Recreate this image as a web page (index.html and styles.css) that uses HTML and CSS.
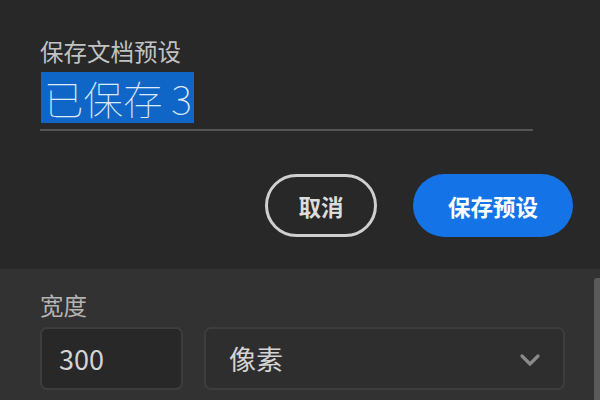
FILE: index.html
```html
<!DOCTYPE html>
<html lang="zh">
<head>
<meta charset="utf-8">
<link rel="stylesheet" href="styles.css">
</head>
<body>
<div class="dialog">
  <div class="label">保存文档预设</div>
  <div class="field"><span class="selected">已保存 3</span></div>
  <div class="actions">
    <button class="btn cancel">取消</button>
    <button class="btn save">保存预设</button>
  </div>
</div>
<div class="panel">
  <div class="label small">宽度</div>
  <div class="row">
    <div class="box num">300</div>
    <div class="box select">
      <span>像素</span>
      <svg class="chev" width="22" height="14" viewBox="0 0 22 14"><path d="M3 3 L11 11 L19 3" fill="none" stroke="#8a8a8a" stroke-width="3.2" stroke-linecap="round" stroke-linejoin="round"/></svg>
    </div>
  </div>
  <div class="scrollbar"></div>
</div>
</body>
</html>
```
FILE: styles.css
```css
html, body {
  margin: 0;
  padding: 0;
  background: #282828;
  font-family: "Noto Sans CJK SC", "Noto Sans", sans-serif;
  width: 600px;
  height: 400px;
  overflow: hidden;
}
.dialog {
  height: 269px;
  box-sizing: border-box;
  padding: 36px 0 0 40px;
  background: #282828;
}
.label {
  font-size: 23.5px;
  line-height: 30px;
  color: #c2c2c2;
}
.field {
  width: 493px;
  margin-top: 6px;
  padding-bottom: 6px;
  border-bottom: 2px solid #555555;
  height: 51px;
}
.selected {
  display: inline-block;
  margin-left: 1px;
  padding: 0 2px 0 3px;
  height: 51px;
  line-height: 51px;
  font-size: 39.5px;
  font-weight: 100;
  color: #dfeaf8;
  background: #0f66c6;
}
.actions {
  display: flex;
  justify-content: flex-end;
  gap: 36px;
  margin-top: 43px;
  padding-right: 27px;
}
.btn {
  font-family: "Noto Sans CJK SC", "Noto Sans", sans-serif;
  font-size: 22.5px;
  font-weight: 700;
  height: 63px;
  border-radius: 32px;
  box-sizing: border-box;
  padding: 0;
}
.cancel {
  width: 112px;
  background: transparent;
  border: 3px solid #cfcfcf;
  color: #dcdcdc;
}
.save {
  width: 160px;
  background: #1473e6;
  border: none;
  color: #ffffff;
}
.panel {
  position: relative;
  height: 131px;
  box-sizing: border-box;
  background: #323232;
  padding: 21px 0 0 40px;
}
.label.small {
  color: #b4b4b4;
}
.row {
  display: flex;
  gap: 21px;
  margin-top: 7px;
}
.box {
  height: 63px;
  box-sizing: border-box;
  border: 2px solid #3d3d3d;
  border-radius: 7px;
  display: flex;
  align-items: center;
  color: #d4d4d4;
  font-size: 27px;
}
.num {
  width: 143px;
  background: #282828;
  padding-left: 17px;
}
.select {
  width: 361px;
  background: #2e2e2e;
  padding: 0 22px 0 23px;
  justify-content: space-between;
}
.chev {
  margin-top: 2px;
}
.scrollbar {
  position: absolute;
  right: 0;
  top: 9px;
  width: 6px;
  height: 130px;
  background: #5a5a5a;
  border-radius: 3px 0 0 0;
}
```
